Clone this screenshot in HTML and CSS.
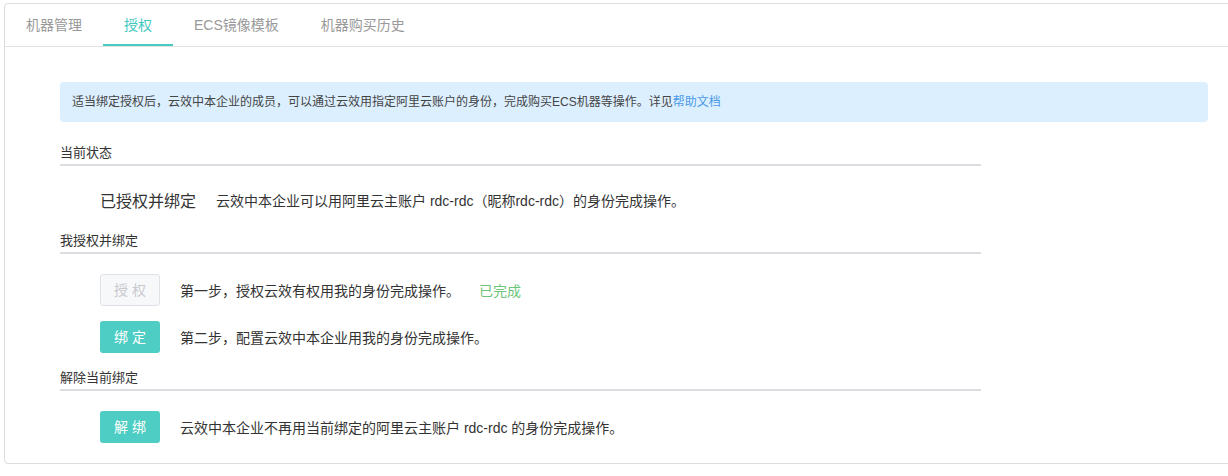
FILE: index.html
```html
<!DOCTYPE html>
<html lang="zh-CN">
<head>
<meta charset="utf-8">
<title>授权</title>
<link rel="stylesheet" href="styles.css">
</head>
<body>
<div class="page">
  <div class="card">
    <div class="tabs">
      <div class="tab">机器管理</div>
      <div class="tab tab-active">授权</div>
      <div class="tab">ECS镜像模板</div>
      <div class="tab">机器购买历史</div>
    </div>
    <div class="content">
      <div class="alert">适当绑定授权后，云效中本企业的成员，可以通过云效用指定阿里云账户的身份，完成购买ECS机器等操作。详见<a class="link">帮助文档</a></div>

      <div class="section">
        <div class="section-title">当前状态</div>
        <div class="section-body section-body-status">
          <div class="row row-status">
            <span class="status-label">已授权并绑定</span>
            <span class="desc">云效中本企业可以用阿里云主账户 rdc-rdc（昵称rdc-rdc）的身份完成操作。</span>
          </div>
        </div>
      </div>

      <div class="section">
        <div class="section-title">我授权并绑定</div>
        <div class="section-body">
          <div class="row">
            <span class="btn btn-disabled">授权</span>
            <span class="desc">第一步，授权云效有权用我的身份完成操作。</span>
            <span class="done">已完成</span>
          </div>
          <div class="row">
            <span class="btn">绑定</span>
            <span class="desc">第二步，配置云效中本企业用我的身份完成操作。</span>
          </div>
        </div>
      </div>

      <div class="section">
        <div class="section-title">解除当前绑定</div>
        <div class="section-body section-body-last">
          <div class="row">
            <span class="btn">解绑</span>
            <span class="desc">云效中本企业不再用当前绑定的阿里云主账户 rdc-rdc 的身份完成操作。</span>
          </div>
        </div>
      </div>
    </div>
  </div>
</div>
</body>
</html>
```

FILE: styles.css
```css
html, body {
  margin: 0;
  padding: 0;
  background: #ffffff;
  overflow: hidden;
}

body {
  font-family: "Liberation Sans", "Noto Sans CJK SC", sans-serif;
  color: #333333;
}

.page {
  padding: 3px 0 0 4px;
}

.card {
  width: 1234px;
  box-sizing: border-box;
  border: 1px solid #dddddd;
  border-radius: 4px;
  background: #ffffff;
}

.tabs {
  display: flex;
  height: 42px;
  border-bottom: 1px solid #e2e2e2;
}

.tab {
  padding: 0 21px;
  font-size: 14px;
  line-height: 42px;
  height: 42px;
  box-sizing: border-box;
  color: #999999;
  white-space: nowrap;
}

.tab-active {
  color: #3fc8bd;
  border-bottom: 2px solid #47cbc0;
}

.content {
  padding: 35px 29px 0 55px;
}

.alert {
  height: 40px;
  line-height: 40px;
  padding: 0 12px;
  background: #dcefff;
  border-radius: 4px;
  font-size: 12px;
  color: #444444;
  white-space: nowrap;
}

.link {
  color: #4a9ae6;
}

.section {
  width: 921px;
}

.section-title {
  font-size: 13px;
  line-height: 20px;
  padding-bottom: 1px;
  border-bottom: 2px solid #dcdce1;
  color: #333333;
}

.alert + .section .section-title {
  margin-top: 21px;
}

.section-body {
  padding: 20px 0 15px 40px;
  display: flex;
  flex-direction: column;
  gap: 15px;
}

.section-body-status {
  padding-bottom: 17px;
}

.section-body-last {
  padding-bottom: 20px;
}

.row {
  display: flex;
  align-items: center;
  height: 32px;
}

.row-status {
  height: 28px;
}

.status-label {
  font-size: 16px;
  color: #333333;
  margin-right: 20px;
}

.desc {
  font-size: 14px;
  color: #333333;
  white-space: nowrap;
}

.btn {
  width: 60px;
  height: 32px;
  box-sizing: border-box;
  border-radius: 3px;
  background: #4dcdc3;
  color: #ffffff;
  font-size: 14px;
  line-height: 32px;
  text-align: center;
  letter-spacing: 4px;
  padding-left: 4px;
  margin-right: 20px;
  flex: none;
}

.btn-disabled {
  background: #f7f8fa;
  border: 1px solid #dfe1e6;
  color: #c9c9cd;
  line-height: 30px;
}

.done {
  margin-left: 19px;
  font-size: 14px;
  color: #6cc57b;
}
```
